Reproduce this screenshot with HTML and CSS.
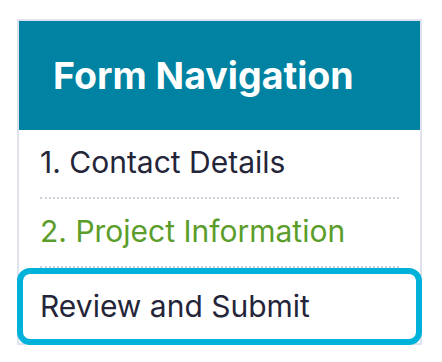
FILE: index.html
```html
<!DOCTYPE html>
<html lang="en">

<head>
    <meta charset="UTF-8">
    <title>Form Navigation</title>
    <link rel="stylesheet" href="styles.css">
</head>

<body>
    <div class="nav">
        <h2 class="nav-head">Form Navigation</h2>
        <ul class="nav-list">
            <li class="nav-item"><a href="#contact">1. Contact Details</a></li>
            <li class="nav-item current"><a href="#project">2. Project Information</a></li>
            <li class="nav-item review"><a href="#review">Review and Submit</a></li>
        </ul>
    </div>
</body>

</html>
```

FILE: styles.css
```css
* {
    margin: 0;
    padding: 0;
    box-sizing: border-box;
}

body {
    background: #fff;
    font-family: Inter, "Open Sans", sans-serif;
}

.nav {
    width: 405px;
    margin: 19px 0 0 17px;
    border: 2px solid #dfe1ec;
}

.nav-head {
    height: 109px;
    padding: 32px 34px 31px;
    font-size: 37.5px;
    line-height: 46px;
    font-weight: 700;
    color: #fff;
    background: #0083a2;
    white-space: nowrap;
}

.nav-list {
    list-style: none;
}

.nav-item {
    margin: 0 21px;
    padding: 14px 0 17px;
    border-bottom: 2px dotted #cfd0da;
    font-size: 30px;
    line-height: 36px;
    white-space: nowrap;
}

.nav-item a {
    color: #25253a;
    text-decoration: none;
}

.nav-item.current a {
    color: #5b9d2b;
}

.nav-item.review {
    margin: 0 -2px -2px;
    padding: 14px 17px 15px;
    border: 6px solid #00b1d9;
    border-radius: 13px;
    background: #fff;
}
```
